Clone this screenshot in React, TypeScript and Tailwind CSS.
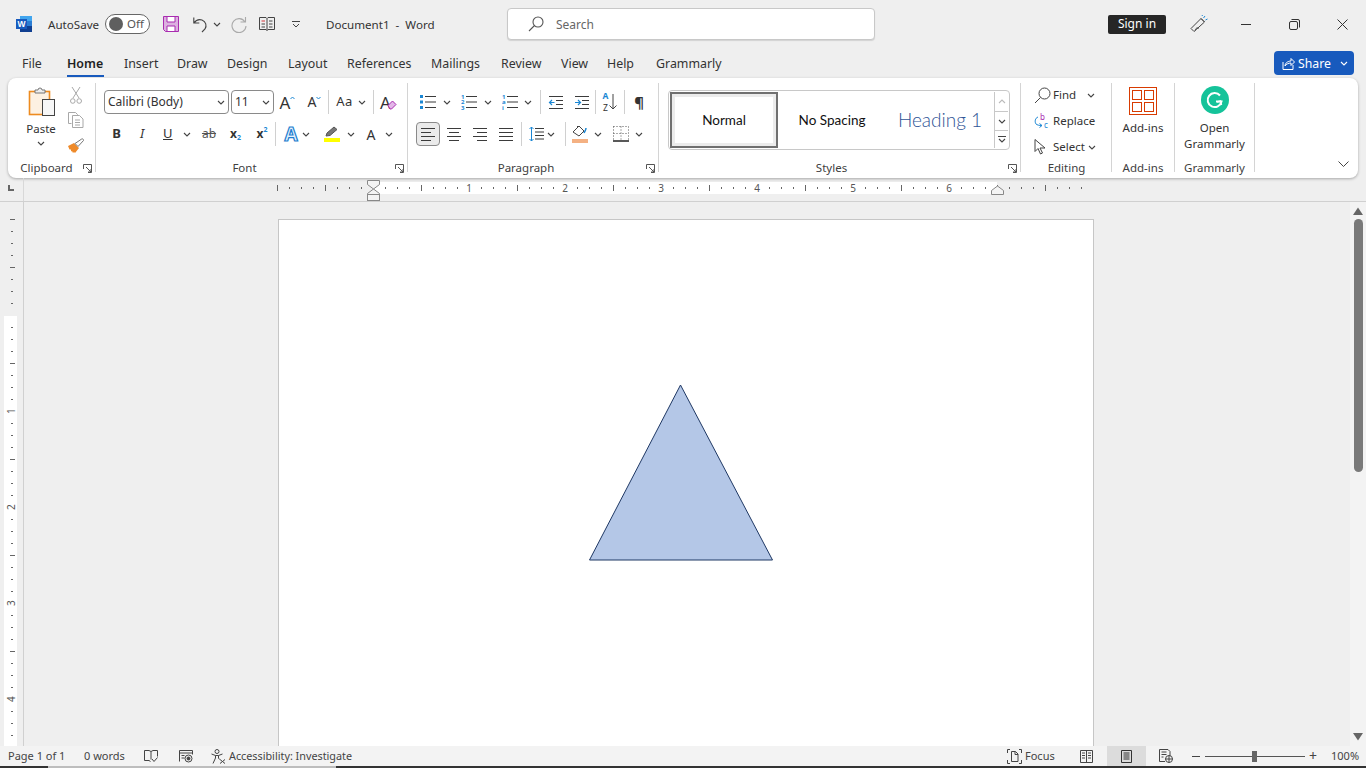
import type { ReactNode } from "react";

const ink = "#3b3b3b";

function Chev({ className = "", color = "#444" }: { className?: string; color?: string }) {
	return (
		<svg width="8" height="5" viewBox="0 0 8 5" className={className} fill="none" stroke={color} strokeWidth="1.1">
			<path d="M1 1l3 3 3-3" />
		</svg>
	);
}

function Sep({ className = "h-[24px]" }: { className?: string }) {
	return <div className={`w-px shrink-0 bg-[#d0d0d0] ${className}`} />;
}

function Launcher() {
	return (
		<svg width="9" height="9" viewBox="0 0 9 9" fill="none" stroke="#555" strokeWidth="1" className="absolute right-[3px] bottom-[5px]">
			<path d="M.5 5V.5H8.5V8.5H5M3 3l5 5M8 5v3H5" />
		</svg>
	);
}

function Group({ label, width, labelClass = "", children, launcher }: { label: string; width: string; labelClass?: string; children: ReactNode; launcher?: boolean }) {
	return (
		<div className={`relative flex h-full shrink-0 flex-col ${width}`}>
			<div className="min-h-0 flex-1">{children}</div>
			<div className={`h-[19px] pt-px text-center text-[11.5px] leading-[15px] text-[#404040] ${labelClass}`}>{label}</div>
			{launcher && <Launcher />}
		</div>
	);
}

function GroupSep() {
	return <div className="mt-[5px] h-[89px] w-px shrink-0 bg-[#d4d4d4]" />;
}

function Cell({ className, children }: { className: string; children?: ReactNode }) {
	return <div className={`flex h-[24px] shrink-0 items-center justify-center ${className}`}>{children}</div>;
}

function Lines({ kind }: { kind: "left" | "center" | "right" | "justify" }) {
	const rows = {
		left: ["M1 2.5h14", "M1 6.5h10", "M1 10.5h14", "M1 14.5h10"],
		center: ["M1 2.5h14", "M3 6.5h10", "M1 10.5h14", "M3 14.5h10"],
		right: ["M1 2.5h14", "M5 6.5h10", "M1 10.5h14", "M5 14.5h10"],
		justify: ["M1 2.5h14", "M1 6.5h14", "M1 10.5h14", "M1 14.5h14"],
	}[kind];
	return (
		<svg width="16" height="16" viewBox="0 0 16 16" fill="none" stroke={ink} strokeWidth="1">
			{rows.map((d) => (
				<path key={d} d={d} />
			))}
		</svg>
	);
}

function ListIcon({ marks }: { marks: string[] }) {
	return (
		<svg width="16" height="16" viewBox="0 0 16 16">
			{marks.map((m, i) =>
				m === "s" ? (
					<rect key={i} x="0" y={1 + i * 5.5} width="3" height="3" fill="#1b87d4" />
				) : (
					<text key={i} x="0" y={4.5 + i * 5.5} fontSize="6" fontWeight="700" fill="#1b87d4" fontFamily="Noto Sans, sans-serif">
						{m}
					</text>
				),
			)}
			<path d="M5 2.5h11M5 8h11M5 13.5h11" stroke={ink} strokeWidth="1" />
		</svg>
	);
}

function Indent({ flip }: { flip?: boolean }) {
	return (
		<svg width="16" height="16" viewBox="0 0 16 16" fill="none">
			<path d="M1 2.5h14M8 6.5h7M8 10.5h7M1 14.5h14" stroke={ink} />
			{flip ? <path d="M1 8.5h5M4 6l2.5 2.5L4 11" stroke="#1b87d4" strokeWidth="1.2" /> : <path d="M6.5 8.5h-5M4 6L1.5 8.5 4 11" stroke="#1b87d4" strokeWidth="1.2" />}
		</svg>
	);
}

function Ruler() {
	const ticks = Array.from({ length: 68 }, (_, i) => 277 + 12 * i).filter((x) => x !== 373);
	return (
		<svg width="1342" height="23" viewBox="24 0 1342 23" className="block shrink-0">
			<rect x="373" y="4" width="624" height="12" fill="#fff" />
			{ticks.map((x) => {
				const offset = x - 373;
				if (offset > 0 && offset % 96 === 0 && x < 997) {
					return (
						<text key={x} x={x} y="14" fontSize="10" fill="#555" textAnchor="middle" fontFamily="Noto Sans, sans-serif">
							{offset / 96}
						</text>
					);
				}
				const long = (x - 325) % 48 === 0;
				return <rect key={x} x={x} y={long ? 7 : 9} width="1" height={long ? 6 : 2} fill="#666" />;
			})}
			<path d="M367.5 2.5h12v4l-6 4.5-6-4.5zM367.5 16.5v-1l6-4.5 6 4.5v1z" fill="#f4f4f4" stroke="#888" />
			<rect x="367.5" y="16.5" width="12" height="6" fill="#f4f4f4" stroke="#888" />
			<path d="M991.5 16.5v-4l6-4.5 6 4.5v4z" fill="#f4f4f4" stroke="#888" />
		</svg>
	);
}

function SideRuler() {
	const ks = Array.from({ length: 44 }, (_, i) => i - 8).filter((k) => k !== 0);
	return (
		<svg width="23" height="544" viewBox="0 202 23 544" className="block">
			<rect x="4" y="316" width="13" height="430" fill="#fff" />
			{ks.map((k) => {
				const y = 315 + 12 * k;
				if (k > 0 && k % 8 === 0) {
					return (
						<text key={k} x="12" y={y + 3} fontSize="10" fill="#555" textAnchor="middle" transform={`rotate(-90 12 ${y})`} fontFamily="Noto Sans, sans-serif">
							{k / 8}
						</text>
					);
				}
				return k % 4 === 0 ? <rect key={k} x="10" y={y} width="5" height="1" fill="#666" /> : <rect key={k} x="11" y={y} width="2" height="1" fill="#666" />;
			})}
		</svg>
	);
}

const tabs = [
	{ name: "File", width: "w-[45px]" },
	{ name: "Home", width: "w-[57px]" },
	{ name: "Insert", width: "w-[53px]" },
	{ name: "Draw", width: "w-[50px]" },
	{ name: "Design", width: "w-[61px]" },
	{ name: "Layout", width: "w-[59px]" },
	{ name: "References", width: "w-[84px]" },
	{ name: "Mailings", width: "w-[70px]" },
	{ name: "Review", width: "w-[60px]" },
	{ name: "View", width: "w-[46px]" },
	{ name: "Help", width: "w-[49px]" },
	{ name: "Grammarly", width: "w-[80px]" },
];

function TitleBar() {
	return (
		<div className="flex h-[48px] shrink-0 items-center text-[11.6px] text-[#333]">
			<div className="ml-[16px] w-[32px]">
				<svg width="16" height="16" viewBox="0 0 16 16">
					<rect x="4" y="0" width="12" height="5" fill="#41a5ee" />
					<rect x="4" y="5" width="12" height="5" fill="#2b7cd3" />
					<rect x="4" y="10" width="12" height="6" fill="#103f91" />
					<rect x="0" y="3" width="11" height="10" fill="#185abd" />
					<text x="5.5" y="11" fontSize="8.5" fontWeight="700" fill="#fff" textAnchor="middle" fontFamily="Liberation Sans, sans-serif">W</text>
				</svg>
			</div>
			<div className="mt-[2px] w-[57px]">AutoSave</div>
			<div className="flex h-[20px] w-[45px] items-center rounded-full border border-[#666] bg-white pl-[3px]">
				<div className="h-[14px] w-[14px] rounded-full bg-[#5f5f5f]" />
				<span className="ml-[4px] text-[11.5px] text-[#555]">Off</span>
			</div>
			<div className="ml-[13px] w-[30px]">
				<svg width="16" height="16" viewBox="0 0 16 16" className="block">
					<path d="M.5.5h15v15h-13l-2-2z" fill="#dcb0e0" stroke="#a92bb0" />
					<path d="M4 1v5h8V1M4 15v-5h8v5" fill="#fff" stroke="#a92bb0" />
				</svg>
			</div>
			<svg width="15" height="17" viewBox="0 0 15 17" fill="none" stroke="#444" strokeWidth="1.1">
				<path d="M.8 1.5v5.5h5.5M1 7c2-3 5-4 8-3 4 1.500 5 6 3 9l-3 3" />
			</svg>
			<Chev className="ml-[5px]" />
			<svg width="17" height="17" viewBox="0 0 17 17" fill="none" stroke="#aaa" strokeWidth="1.1" className="ml-[9px]">
				<path d="M15.500 1v5h-5M15 6a7 7 0 1 0 1 4" />
			</svg>
			<svg width="16" height="16" viewBox="0 0 16 16" fill="none" stroke="#444" className="ml-[12px]">
				<path d="M.5 1.500h6.500L8 2.500l1-1h6.500v12H9l-1 1-1-1H.5zM8 2.500v12" />
				<path d="M2.500 5h3.500" stroke="#d13438" />
				<path d="M2.500 8h3.500M2.500 11h3.500M10 5h3.500M10 8h3.500M10 11h3.500" />
			</svg>
			<svg width="8" height="7" viewBox="0 0 8 7" fill="none" stroke="#444" className="ml-[17px]">
				<path d="M0 .5h8M1 3l3 3 3-3" />
			</svg>
			<div className="ml-[26px] mt-[2px] w-[181px] whitespace-pre">Document1  -  Word</div>
			<div className="flex h-[32px] w-[368px] items-center rounded-[4px] border border-[#c8c8c8] bg-white pl-[20px] shadow-[0_1px_1px_rgba(0,0,0,0.12)]">
				<svg width="16" height="16" viewBox="0 0 16 16" fill="none" stroke="#555" strokeWidth="1.1">
					<circle cx="10" cy="6" r="5" />
					<path d="M6.500 9.500L1 15" />
				</svg>
				<span className="ml-[12px] mt-[2px] text-[12px] text-[#666]">Search</span>
			</div>
			<div className="ml-[233px] flex h-[19px] w-[58px] items-center justify-center rounded-[2px] bg-[#262626] text-[12px] text-white">Sign in</div>
			<svg width="18" height="18" viewBox="0 0 18 18" fill="none" stroke="#444" className="ml-[24px]">
				<path d="M1 13.500L11 3.500l3.500 3.500L4 16.500zM11 3.500l3.500 3.500M5.500 15.500c-.500-2 2-3.500 3.500-2" />
				<path d="M13.500 3l1.500-2M15.500 5l2-1M12 1l.5-1" stroke="#1b87d4" />
			</svg>
			<div className="ml-[33px] h-px w-[10px] bg-[#333]" />
			<svg width="11" height="11" viewBox="0 0 11 11" fill="none" stroke="#333" className="ml-[38px]">
				<rect x=".5" y="2.500" width="8" height="8" rx="1.500" />
				<path d="M2.500.5h6.500a1.500 1.500 0 0 1 1.500 1.500v6.500" />
			</svg>
			<svg width="11" height="11" viewBox="0 0 11 11" fill="none" stroke="#333" className="ml-[37px]">
				<path d="M.5.5l10 10M10.500.5l-10 10" />
			</svg>
		</div>
	);
}

function TabsRow() {
	return (
		<div className="flex h-[30px] shrink-0 items-center pl-[22px] text-[12.4px] text-[#333]">
			{tabs.map((tab) => (
				<div key={tab.name} className={`relative mt-[2px] shrink-0 ${tab.width}`}>
					<span className={tab.name === "Home" ? "font-semibold text-[#1f1f1f]" : ""}>{tab.name}</span>
					{tab.name === "Home" && <div className="absolute top-[20px] left-0 h-[2px] w-[37px] bg-[#185abd]" />}
				</div>
			))}
			<div className="ml-auto mr-[12px] flex h-[24px] w-[80px] items-center rounded-[4px] bg-[#185abd] pl-[8px] text-white">
				<svg width="13" height="13" viewBox="0 0 13 13" fill="none" stroke="#fff">
					<path d="M1 5v7.500h10V8M3 9c0-3 3-5 6-5V1.500L12.500 5 9 8.500V6C6.500 6 4.500 7 3 9z" />
				</svg>
				<span className="ml-[3px] mt-[2px] text-[12.3px]">Share</span>
				<Chev color="#fff" className="ml-[9px]" />
			</div>
		</div>
	);
}

function ClipboardGroup() {
	return (
		<div className="flex h-full pt-[9px]">
			<div className="ml-[18px] flex w-[30px] flex-col items-center">
				<svg width="30" height="30" viewBox="0 0 30 30">
					<rect x="3.500" y="4.500" width="20" height="23" fill="#fdf1e2" stroke="#ed8b1f" strokeWidth="1.600" />
					<path d="M9 5V3h3a2 2 0 0 1 4 0h3v3H9z" fill="#eee" stroke="#777" />
					<rect x="16.500" y="12.500" width="12" height="16" fill="#f7f7f7" stroke="#444" />
				</svg>
				<div className="mt-[3px] text-[11.5px] leading-[18px] text-[#333]">Paste</div>
				<Chev className="mt-[3px]" />
			</div>
			<div className="ml-[10px] flex w-[20px] flex-col items-center">
				<svg width="12" height="18" viewBox="0 0 12 18" fill="none" stroke="#a8a8a8">
					<path d="M2 0l7 11M10 0L3 11" />
					<circle cx="2.800" cy="14" r="2.300" />
					<circle cx="9.200" cy="14" r="2.300" />
				</svg>
				<svg width="16" height="16" viewBox="0 0 16 16" fill="none" stroke="#a8a8a8" className="mt-[7px]">
					<path d="M3.500 11.500H.5V.5h7l2 2v1" />
					<path d="M4.500 3.500h7l3.500 3.500v8.500H4.500zM7 8h5M7 10.500h5M7 13h5" />
				</svg>
				<svg width="16" height="16" viewBox="0 0 16 16" className="mt-[10px]">
					<path d="M0 8l6-3 5 5-4 5-1-1-1 1-1-2-1 .5 0-2-1.500 0z" fill="#ee8a2a" />
					<path d="M7 5.500l3 3 5.500-6c.5-.800-1-2.200-1.800-1.500z" fill="#fff" stroke="#777" />
				</svg>
			</div>
		</div>
	);
}

function FontGroup() {
	return (
		<div className="flex h-full flex-col pt-[12px] pl-[8px] text-[#333]">
			<div className="flex h-[24px] items-center">
				<div className="flex h-[24px] w-[125px] items-center justify-between rounded-[4px] border border-[#8a8a8a] bg-white px-[3px] text-[12px]">
					<span>Calibri (Body)</span>
					<Chev />
				</div>
				<div className="ml-[2px] flex h-[24px] w-[43px] items-center justify-between rounded-[4px] border border-[#8a8a8a] bg-white px-[3px] text-[12px]">
					<span>11</span>
					<Chev />
				</div>
				<Cell className="w-[27px]">
					<span className="text-[17px] leading-none">A</span>
					<svg width="5" height="4" viewBox="0 0 5 4" fill="none" stroke="#1b87d4" className="mb-[9px]"><path d="M.5 3l2-2 2 2" /></svg>
				</Cell>
				<Cell className="w-[27px]">
					<span className="text-[14px] leading-none">A</span>
					<svg width="5" height="4" viewBox="0 0 5 4" fill="none" stroke="#1b87d4" className="mb-[9px]"><path d="M.5 1l2 2 2-2" /></svg>
				</Cell>
				<Sep />
				<Cell className="w-[44px]">
					<span className="text-[13px] tracking-[0.5px]">Aa</span>
					<Chev className="ml-[5px]" />
				</Cell>
				<Sep />
				<Cell className="w-[29px]">
					<span className="text-[17px] leading-none">A</span>
					<svg width="10" height="10" viewBox="0 0 10 10" className="-ml-[4px] mt-[6px]"><path d="M1 5.500l4.500-4.500 3.500 3.500-4.500 4.500H3z" fill="#e3b7e8" stroke="#a92bb0" /></svg>
				</Cell>
			</div>
			<div className="mt-[8px] flex h-[24px] items-center">
				<Cell className="w-[25px] text-[13px] font-bold">B</Cell>
				<Cell className="w-[26px] text-[13px] italic">I</Cell>
				<Cell className="w-[41px] justify-start pl-[8px]">
					<span className="text-[13px] underline">U</span>
					<Chev className="ml-[10px]" />
				</Cell>
				<Cell className="w-[26px] text-[12px] text-[#555] line-through">ab</Cell>
				<Cell className="w-[27px]">
					<span className="text-[12px] font-bold">x</span>
					<span className="mt-[8px] text-[7px] font-bold text-[#1b87d4]">2</span>
				</Cell>
				<Cell className="w-[26px]">
					<span className="text-[12px] font-bold">x</span>
					<span className="mb-[8px] text-[7px] font-bold text-[#1b87d4]">2</span>
				</Cell>
				<Sep />
				<Cell className="w-[42px] justify-start pl-[7px]">
					<span className="w-[16px] text-center text-[19px] font-bold leading-[24px] text-[#e4f2fc] [-webkit-text-stroke:1.2px_#1f7fd0]">A</span>
					<Chev className="ml-[3px]" />
				</Cell>
				<Cell className="w-[42px]">
					<div className="flex w-[16px] flex-col items-center">
						<svg width="15" height="11" viewBox="0 0 15 11" fill="none" stroke="#555">
							<path d="M2 10l1-3 7-6 3 2.500-7 6z" fill="#777" />
						</svg>
						<div className="mt-[1px] h-[4px] w-[16px] bg-[#ffff00]" />
					</div>
					<Chev className="ml-[7px]" />
				</Cell>
				<Cell className="w-[40px]">
					<span className="text-[14px]">A</span>
					<Chev className="ml-[10px]" />
				</Cell>
			</div>
		</div>
	);
}

function ParagraphGroup() {
	return (
		<div className="flex h-full flex-col pt-[12px] text-[#333]">
			<div className="ml-[12px] flex h-[24px] items-center">
				<Cell className="w-[41px] justify-start"><ListIcon marks={["s", "s", "s"]} /><Chev className="ml-[7px]" /></Cell>
				<Cell className="w-[41px] justify-start"><ListIcon marks={["1", "2", "3"]} /><Chev className="ml-[7px]" /></Cell>
				<Cell className="w-[38px] justify-start"><ListIcon marks={["1", "a", "i"]} /><Chev className="ml-[6px]" /></Cell>
				<Sep />
				<Cell className="w-[23px] justify-end"><Indent /></Cell>
				<Cell className="w-[26px] justify-end"><Indent flip /></Cell>
				<div className="ml-[5px]"><Sep /></div>
				<Cell className="w-[28px]">
					<div className="flex flex-col items-center text-[8.5px] leading-[12px]">
						<span className="font-bold text-[#1b87d4]">A</span>
						<span>Z</span>
					</div>
					<svg width="8" height="18" viewBox="0 0 8 18" fill="none" stroke="#444" className="ml-[1px]">
						<path d="M4 1v15M.5 12.500L4 16l3.500-3.500" />
					</svg>
				</Cell>
				<Sep />
				<Cell className="w-[28px] text-[15px] font-bold">¶</Cell>
			</div>
			<div className="mt-[8px] flex h-[24px] items-center pl-[8px]">
				<Cell className="w-[24px] rounded-[4px] border border-[#8a8a8a] bg-[#ebebeb]"><Lines kind="left" /></Cell>
				<Cell className="ml-[2px] w-[24px]"><Lines kind="center" /></Cell>
				<Cell className="ml-[1px] w-[26px]"><Lines kind="right" /></Cell>
				<Cell className="w-[26px]"><Lines kind="justify" /></Cell>
				<Sep className="ml-[2px] h-[24px]" />
				<Cell className="w-[43px] justify-start pl-[7px]">
					<svg width="15" height="16" viewBox="0 0 15 16" fill="none">
						<path d="M2.500 1v14M.5 3l2-2 2 2M.5 13l2 2 2-2" stroke="#1b87d4" />
						<path d="M6 2.500h9M6 6h9M6 9.500h9M6 13h9" stroke={ink} />
					</svg>
					<Chev className="ml-[3px]" />
				</Cell>
				<Sep />
				<Cell className="w-[47px] justify-start pl-[6px]">
					<div className="flex flex-col items-center">
						<svg width="16" height="13" viewBox="0 0 16 13" fill="none" stroke="#444">
							<path d="M1 7l6-6 5 5-5 5zM6 2l-1-1" />
							<path d="M12 8c1-2 2-3 2-5" stroke="#1b87d4" strokeWidth="1.500" />
						</svg>
						<div className="mt-[1px] h-[4px] w-[16px] bg-[#f4b183]" />
					</div>
					<Chev className="ml-[6px]" />
				</Cell>
				<Cell className="w-[40px] justify-start">
					<svg width="16" height="16" viewBox="0 0 16 16" fill="none" stroke="#555" strokeDasharray="1 2">
						<path d="M.5.5h15M.5.5v14M15.500.5v14M8 .5v14M.5 7.500h15" />
						<path d="M0 15h16" stroke="#222" strokeDasharray="none" strokeWidth="1.500" />
					</svg>
					<Chev className="ml-[6px]" />
				</Cell>
			</div>
		</div>
	);
}

function StylesGroup() {
	return (
		<div className="h-full pt-[12px] pl-[9px]">
			<div className="flex h-[60px] w-[342px] rounded-[4px] border border-[#c8c8c8] bg-white p-px">
				<div className="flex h-[56px] w-[108px] shrink-0 items-center justify-center border-[2px] border-[#707070] bg-white shadow-[inset_0_0_0_3px_#ececec] font-['Lato',sans-serif] text-[13.5px] text-[#111]">Normal</div>
				<div className="flex w-[108px] shrink-0 items-center justify-center font-['Lato',sans-serif] text-[13.5px] text-[#111]">No Spacing</div>
				<div className="flex w-[108px] shrink-0 items-center justify-center font-['Lato',sans-serif] text-[19px] font-light text-[#2f5496]">Heading 1</div>
				<div className="flex flex-1 flex-col border-l border-[#c8c8c8]">
					<div className="flex h-[20px] items-center justify-center border-b border-[#c8c8c8]">
						<Chev color="#bbb" className="rotate-180" />
					</div>
					<div className="flex h-[19px] items-center justify-center border-b border-[#c8c8c8]">
						<Chev />
					</div>
					<div className="flex flex-1 flex-col items-center justify-center">
						<div className="mb-[1px] h-px w-[8px] bg-[#444]" />
						<Chev />
					</div>
				</div>
			</div>
		</div>
	);
}

function EditingRow({ icon, label, chevron }: { icon: ReactNode; label: string; chevron: ReactNode }) {
	return (
		<div className="flex h-[26px] items-center">
			<div className="flex w-[19px] justify-start">{icon}</div>
			<span className="text-[11.5px] text-[#333]">{label}</span>
			{chevron}
		</div>
	);
}

function EditingGroup() {
	return (
		<div className="h-full pt-[4px] pl-[13px]">
			<EditingRow
				label="Find"
				chevron={<Chev className="ml-[11px]" />}
				icon={
					<svg width="17" height="17" viewBox="0 0 17 17" fill="none" stroke="#444">
						<circle cx="10.500" cy="6.500" r="5.500" />
						<path d="M6.500 10.500L1 16" />
					</svg>
				}
			/>
			<EditingRow
				label="Replace"
				chevron={null}
				icon={
					<svg width="16" height="20" viewBox="0 0 16 20" fill="none">
						<text x="6" y="9" fontSize="8" fill="#a92bb0" fontFamily="Noto Sans, sans-serif">b</text>
						<text x="10" y="17" fontSize="8" fill="#1b87d4" fontFamily="Noto Sans, sans-serif">c</text>
						<path d="M4 6C1 7 .5 11 2 13c1 1 3 1.500 6 1.500M5.500 12.500l2.500 2-2.500 2" stroke="#1b87d4" />
					</svg>
				}
			/>
			<EditingRow
				label="Select"
				chevron={<Chev className="ml-[3px]" />}
				icon={
					<svg width="13" height="16" viewBox="0 0 13 16" fill="none" stroke="#444">
						<path d="M1 .5v12l3-3 2.500 5.500 2-1L6 9h5z" fill="#fff" />
					</svg>
				}
			/>
		</div>
	);
}

function AddinsGroup() {
	return (
		<div className="flex h-full flex-col items-center pt-[9px]">
			<svg width="28" height="28" viewBox="0 0 28 28" fill="none" stroke="#d83b01">
				<rect x=".5" y=".5" width="27" height="27" />
				<rect x="3.500" y="3.500" width="9" height="9" />
				<rect x="15.500" y="3.500" width="9" height="9" />
				<rect x="3.500" y="15.500" width="9" height="9" />
				<rect x="15.500" y="15.500" width="9" height="9" />
			</svg>
			<div className="mt-[4px] text-[11.5px] leading-[18px] text-[#333]">Add-ins</div>
		</div>
	);
}

function GrammarlyGroup() {
	return (
		<div className="flex h-full flex-col items-center pt-[8px]">
			<svg width="28" height="28" viewBox="0 0 28 28">
				<circle cx="14" cy="14" r="14" fill="#15c39a" />
				<path d="M19 9.500a7 7 0 1 0 1.500 6H15" fill="none" stroke="#fff" strokeWidth="2" />
				<path d="M20.500 19l-1-4-3.500 1" fill="none" stroke="#fff" strokeWidth="1.500" />
			</svg>
			<div className="mt-[6px] text-center text-[11.5px] leading-[16px] text-[#333]">
				Open
				<br />
				Grammarly
			</div>
		</div>
	);
}

function Ribbon() {
	return (
		<div className="mx-[8px] flex h-[100px] shrink-0 rounded-[8px] bg-white shadow-[0_1px_3px_rgba(0,0,0,0.3)]">
			<Group label="Clipboard" width="w-[87px]" labelClass="pr-[10px]" launcher><ClipboardGroup /></Group>
			<GroupSep />
			<Group label="Font" width="w-[311px]" labelClass="pr-[14px]" launcher><FontGroup /></Group>
			<GroupSep />
			<Group label="Paragraph" width="w-[250px]" labelClass="pr-[14px]" launcher><ParagraphGroup /></Group>
			<GroupSep />
			<Group label="Styles" width="w-[361px]" labelClass="pr-[16px]" launcher><StylesGroup /></Group>
			<GroupSep />
			<Group label="Editing" width="w-[90px]" labelClass="pl-[1px]"><EditingGroup /></Group>
			<GroupSep />
			<Group label="Add-ins" width="w-[62px]"><AddinsGroup /></Group>
			<GroupSep />
			<Group label="Grammarly" width="w-[79px]"><GrammarlyGroup /></Group>
			<GroupSep />
			<div className="flex flex-1 items-end justify-end pr-[9px] pb-[11px]">
				<svg width="11" height="6" viewBox="0 0 11 6" fill="none" stroke="#444"><path d="M.5.5l5 5 5-5" /></svg>
			</div>
		</div>
	);
}

function StatusBar() {
	return (
		<div className="flex h-[20px] shrink-0 items-center bg-[#f3f3f3] pl-[8px] text-[11px] text-[#444]">
			<span className="w-[76px]">Page 1 of 1</span>
			<span className="w-[60px]">0 words</span>
			<svg width="14" height="14" viewBox="0 0 14 14" fill="none" stroke="#444">
				<path d="M6.500 12.500L5 11.500H.5v-10H5l2 1 2-1h4.500v6M7 2.500v8M8 10l2 2.500 3.500-4" />
			</svg>
			<svg width="14" height="14" viewBox="0 0 14 14" fill="none" stroke="#444" className="ml-[21px]">
				<path d="M.5 12.500v-11h13v4M.5 4h13M2.500 6.500h3M2.500 9h3" />
				<circle cx="9.500" cy="9.500" r="3.500" />
				<circle cx="9.500" cy="9.500" r="1.500" fill="#444" />
			</svg>
			<svg width="15" height="15" viewBox="0 0 15 15" fill="none" stroke="#444" className="ml-[18px]">
				<circle cx="6" cy="2.500" r="2" />
				<path d="M.5 5l4 1.500h3l4-1.500M4.500 6.500v2.500L2 14.500M7.500 6.500V9l1 1.500M9 10.500l5 4M14 10.500l-5 4" />
			</svg>
			<span className="ml-[3px] w-[126px] whitespace-nowrap text-[10.8px]">Accessibility: Investigate</span>
			<svg width="15" height="15" viewBox="0 0 15 15" fill="none" stroke="#444" className="ml-[652px]">
				<path d="M.5 4V.5H3M12 .5h2.500V4M.5 11v3.500H3M12 14.500h2.500V11" />
				<path d="M4.500 2.500h4l2.500 2.500v7.500h-6.500zM8 2.500V5.500h3" />
			</svg>
			<span className="ml-[3px] w-[36px] text-[11px]">Focus</span>
			<svg width="13" height="13" viewBox="0 0 13 13" fill="none" stroke="#444" className="ml-[19px]">
				<path d="M.5.5h12v12H.5zM6.500.5v12M2 3h3M2 5.500h3M2 8h3M8 3h3M8 5.500h3M8 8h3" />
			</svg>
			<div className="ml-[14px] flex h-[20px] w-[39px] items-center justify-center bg-[#dcdcdc]">
				<svg width="11" height="13" viewBox="0 0 11 13" fill="none" stroke="#333">
					<path d="M.5.5h10v12H.5zM2.500 3h6M2.500 5h6M2.500 7h6M2.500 9h6" />
				</svg>
			</div>
			<svg width="14" height="14" viewBox="0 0 14 14" fill="none" stroke="#444" className="ml-[13px]">
				<path d="M6 12.500H.5V.5H9l2 2V7M2.500 3h5M2.500 5.500h5M2.500 8h2" />
				<circle cx="10" cy="10" r="3.500" />
				<path d="M6.500 10h7M10 6.500v7" />
			</svg>
			<div className="ml-[19px] h-px w-[8px] bg-[#444]" />
			<div className="relative ml-[5px] h-px w-[100px] bg-[#555]">
				<div className="absolute top-[-5px] left-[47px] h-[11px] w-[5px] bg-[#666]" />
			</div>
			<span className="w-[16px] text-center text-[14px] leading-none">+</span>
			<span className="ml-[10px]">100%</span>
		</div>
	);
}

export default function App() {
	return (
		<div className="flex h-[768px] w-[1366px] flex-col overflow-hidden bg-[#efefef] font-['Noto_Sans',sans-serif]">
			<TitleBar />
			<TabsRow />
			<Ribbon />
			<div className="flex h-[24px] shrink-0 border-b border-[#d0d0d0]">
				<div className="flex h-[23px] w-[24px] shrink-0 items-center border-r border-[#d8d8d8] pl-[8px]">
					<div className="mb-[3px] h-[6px] w-[6px] border-b-2 border-l-2 border-[#666]" />
				</div>
				<Ruler />
			</div>
			<div className="flex min-h-0 flex-1">
				<div className="w-[24px] shrink-0 border-r border-[#d0d0d0]">
					<SideRuler />
				</div>
				<div className="flex min-w-0 flex-1 pt-[17px] pl-[254px]">
					<div className="relative w-[816px] border-x border-t border-[#c6c6c6] bg-white">
						<svg width="186" height="177" viewBox="0 0 186 177" className="absolute top-[164px] left-[309px]">
							<path d="M92.500 1L1.500 176H184.500z" fill="#b4c7e7" stroke="#1f3864" strokeWidth="1" />
						</svg>
					</div>
				</div>
				<div className="flex w-[16px] shrink-0 flex-col items-center bg-[#f3f3f3] pt-[5px]">
					<svg width="10" height="8" viewBox="0 0 10 8" fill="#666"><path d="M5 .5L10 8H0z" /></svg>
					<div className="mt-[4px] h-[253px] w-[9px] rounded-full bg-[#7a7a7a]" />
					<svg width="10" height="8" viewBox="0 0 10 8" fill="#666" className="mt-auto mb-[5px]"><path d="M5 7.500L10 0H0z" /></svg>
				</div>
			</div>
			<StatusBar />
			<div className="flex h-[2px] shrink-0 bg-[#333]">
				<div className="ml-[48px] h-full w-[288px] bg-[#bdbdbd]" />
			</div>
		</div>
	);
}
